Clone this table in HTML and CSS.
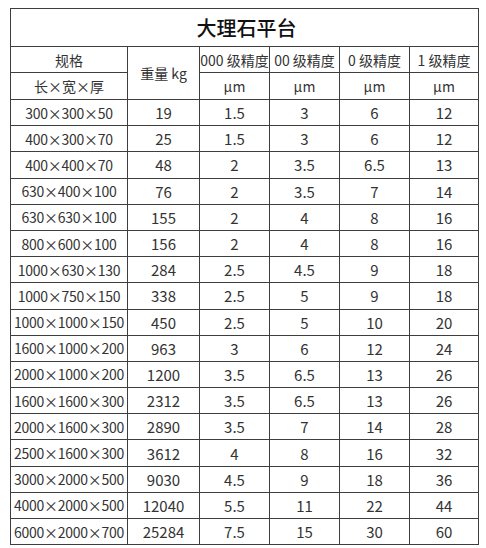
FILE: index.html
```html
<!DOCTYPE html>
<html lang="zh">
<head>
<meta charset="utf-8">
<title>大理石平台</title>
<link rel="stylesheet" href="styles.css">
</head>
<body>
<table class="spec">
  <colgroup>
    <col class="c-size"><col class="c-weight"><col class="c-g"><col class="c-g"><col class="c-g"><col class="c-g1">
  </colgroup>
  <thead>
    <tr class="title-row"><th colspan="6" class="title">大理石平台</th></tr>
    <tr class="h1">
      <th>规格</th>
      <th rowspan="2" class="weight">重量 kg</th>
      <th>000 级精度</th>
      <th>00 级精度</th>
      <th>0 级精度</th>
      <th>1 级精度</th>
    </tr>
    <tr class="h2">
      <th>长×宽×厚</th>
      <th>μm</th><th>μm</th><th>μm</th><th>μm</th>
    </tr>
  </thead>
  <tbody>
    <tr><td>300×300×50</td><td>19</td><td>1.5</td><td>3</td><td>6</td><td>12</td></tr>
    <tr><td>400×300×70</td><td>25</td><td>1.5</td><td>3</td><td>6</td><td>12</td></tr>
    <tr><td>400×400×70</td><td>48</td><td>2</td><td>3.5</td><td>6.5</td><td>13</td></tr>
    <tr><td>630×400×100</td><td>76</td><td>2</td><td>3.5</td><td>7</td><td>14</td></tr>
    <tr><td>630×630×100</td><td>155</td><td>2</td><td>4</td><td>8</td><td>16</td></tr>
    <tr><td>800×600×100</td><td>156</td><td>2</td><td>4</td><td>8</td><td>16</td></tr>
    <tr><td>1000×630×130</td><td>284</td><td>2.5</td><td>4.5</td><td>9</td><td>18</td></tr>
    <tr><td>1000×750×150</td><td>338</td><td>2.5</td><td>5</td><td>9</td><td>18</td></tr>
    <tr><td>1000×1000×150</td><td>450</td><td>2.5</td><td>5</td><td>10</td><td>20</td></tr>
    <tr><td>1600×1000×200</td><td>963</td><td>3</td><td>6</td><td>12</td><td>24</td></tr>
    <tr><td>2000×1000×200</td><td>1200</td><td>3.5</td><td>6.5</td><td>13</td><td>26</td></tr>
    <tr><td>1600×1600×300</td><td>2312</td><td>3.5</td><td>6.5</td><td>13</td><td>26</td></tr>
    <tr><td>2000×1600×300</td><td>2890</td><td>3.5</td><td>7</td><td>14</td><td>28</td></tr>
    <tr><td>2500×1600×300</td><td>3612</td><td>4</td><td>8</td><td>16</td><td>32</td></tr>
    <tr><td>3000×2000×500</td><td>9030</td><td>4.5</td><td>9</td><td>18</td><td>36</td></tr>
    <tr><td>4000×2000×500</td><td>12040</td><td>5.5</td><td>11</td><td>22</td><td>44</td></tr>
    <tr><td>6000×2000×700</td><td>25284</td><td>7.5</td><td>15</td><td>30</td><td>60</td></tr>
  </tbody>
</table>
</body>
</html>
```

FILE: styles.css
```css
html, body {
  margin: 0;
  padding: 0;
  background: #ffffff;
}

body {
  padding: 8px 0 0 10px;
  font-family: "Noto Sans CJK SC", "Noto Sans", sans-serif;
  color: #333333;
}

.spec {
  border-collapse: collapse;
  table-layout: fixed;
  width: 468px;
}

.c-size { width: 117px; }
.c-weight { width: 72px; }
.c-g { width: 70px; }
.c-g1 { width: 69px; }

.spec th,
.spec td {
  border: 1px solid #3e3e3e;
  padding: 0;
  text-align: center;
  white-space: nowrap;
  overflow: hidden;
  font-weight: normal;
  line-height: 1;
}

.spec td {
  font-size: 15px;
}

.spec td:first-child {
  font-size: 14px;
  letter-spacing: -0.25px;
}

.spec th {
  font-size: 14px;
}

.title-row { height: 38px; }

.spec .title {
  font-size: 20px;
  font-weight: 500;
  color: #111111;
  padding-left: 4px;
}

.h1 { height: 26px; }
.h2 { height: 27px; }

.spec tbody tr { height: 26.2px; }

.weight { font-size: 14px; }
```
